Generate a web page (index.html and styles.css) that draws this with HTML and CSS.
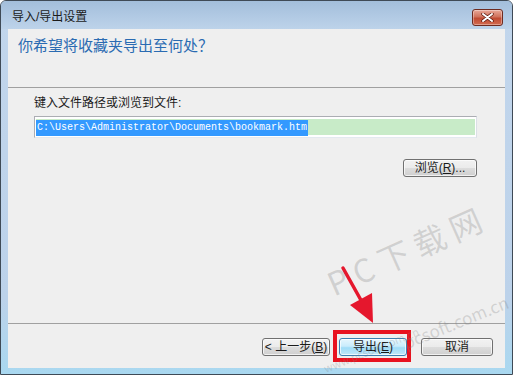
FILE: index.html
```html
<!DOCTYPE html>
<html lang="zh-CN">

<head>
    <meta charset="UTF-8">
    <meta name="viewport" content="width=device-width, initial-scale=1.0">
    <title>导入/导出设置</title>
    <link rel="stylesheet" href="styles.css">
</head>

<body>

    <div class="window">
        <div class="titlebar">
            <span class="title">导入/导出设置</span>
            <button class="close" aria-label="关闭">
                <svg width="13" height="9" viewBox="0 0 13 9">
                    <path d="M2 1 L11 8 M11 1 L2 8" stroke="#5a1a10" stroke-width="3.4" stroke-linecap="round" />
                    <path d="M2 1 L11 8 M11 1 L2 8" stroke="#ffffff" stroke-width="2" stroke-linecap="round" />
                </svg>
            </button>
        </div>

        <div class="client">
            <div class="header">
                <h1>你希望将收藏夹导出至何处？</h1>
            </div>

            <div class="body">
                <label class="label" for="pathInput">键入文件路径或浏览到文件:</label>
                <div class="path" id="pathInput">
                    <div class="path-line"><span class="selected">C:\Users\Administrator\Documents\bookmark.htm</span></div>
                </div>
                <div class="browse-row">
                    <button class="btn btn-browse">浏览(<u>R</u>)...</button>
                </div>
            </div>

            <div class="footer">
                <button class="btn btn-back">&lt; 上一步(<u>B</u>)</button>
                <button class="btn btn-default">导出(<u>E</u>)</button>
                <button class="btn btn-cancel">取消</button>
            </div>
        </div>

        <!-- annotation drawn over the dialog -->
        <svg class="arrow" width="513" height="375" viewBox="0 0 513 375">
            <line x1="343" y1="268" x2="362" y2="302" stroke="#e5172d" stroke-width="3.5" stroke-linecap="round" />
            <polygon points="373,323 350,305 372,293" fill="#e5172d" />
        </svg>

        <div class="watermark">
            <span class="wm-big">P C 下 载 网</span>
            <span class="wm-url">pcsoft.com.cn</span>
            <span class="wm-small">www.pcsoft.com.cn</span>
        </div>
    </div>

</body>

</html>
```

FILE: styles.css
```css
body {
    margin: 0;
    font-family: 'Liberation Sans', 'Noto Sans CJK SC', sans-serif;
    font-size: 12px;
    background-color: #ffffff;
}

.window {
    position: relative;
    width: 511px;
    height: 373px;
    border: 1px solid #3f4a56;
    border-radius: 6px 6px 0 0;
    background: linear-gradient(to bottom, #c2d6ec, #bcd2ea 80%, #a9d8f0);
    display: flex;
    flex-direction: column;
    overflow: hidden;
}

.titlebar {
    height: 28px;
    box-sizing: border-box;
    padding: 8px 9px 0 11px;
    display: flex;
    align-items: flex-start;
    background: linear-gradient(to bottom, #a3bedb, #bdd3ea);
}

.title {
    flex: 1;
    line-height: 16px;
    color: #1b1b1b;
}

.close {
    width: 31px;
    height: 17px;
    padding: 0;
    border: 1px solid #6e2b20;
    border-radius: 3px;
    background: linear-gradient(to bottom, #e9a898, #d0725c 45%, #c04a32 55%, #d26b50);
    box-shadow: inset 0 0 0 1px rgba(255, 255, 255, 0.35);
    display: flex;
    align-items: center;
    justify-content: center;
}

.client {
    flex: 1;
    margin: 0 7px 6px 7px;
    background-color: #efefef;
    display: flex;
    flex-direction: column;
}

.header {
    height: 59px;
    box-sizing: border-box;
    padding: 6px 0 0 10px;
    border-bottom: 1px solid #a0a0a0;
}

.header h1 {
    margin: 0;
    font-family: 'Noto Sans CJK SC', sans-serif;
    font-size: 15px;
    font-weight: normal;
    line-height: 20px;
    color: #2a6bb2;
}

.body {
    flex: 1;
    padding: 7px 28px 0 26px;
    display: flex;
    flex-direction: column;
}

.label {
    line-height: 16px;
    color: #1b1b1b;
}

.path {
    margin-top: 5px;
    height: 22px;
    box-sizing: border-box;
    padding: 2px 1px;
    border: 1px solid #abadb3;
    border-right-color: #dbdfe6;
    border-bottom-color: #e3e9ef;
    background-color: #ffffff;
}

.path-line {
    height: 16px;
    background-color: #c8ebc8;
}

.selected {
    display: inline-block;
    height: 16px;
    padding: 0 1px;
    background-color: #3399ff;
    color: #ffffff;
    font-family: 'Liberation Mono', monospace;
    font-size: 10px;
    line-height: 16px;
}

.browse-row {
    margin-top: 21px;
    display: flex;
    justify-content: flex-end;
}

.btn {
    position: relative;
    height: 18px;
    padding: 0;
    border: 1px solid #707070;
    border-radius: 3px;
    background: linear-gradient(to bottom, #f2f2f2, #ebebeb 50%, #dddddd 50%, #cfcfcf);
    box-shadow: inset 0 0 0 1px rgba(255, 255, 255, 0.7);
    font-family: 'Liberation Sans', 'Noto Sans CJK SC', sans-serif;
    font-size: 12px;
    line-height: 14px;
    color: #1b1b1b;
}

.btn u {
    text-decoration: underline;
}

.btn-browse {
    width: 74px;
}

.footer {
    height: 45px;
    box-sizing: border-box;
    padding: 14px 12px 0 0;
    border-top: 1px solid #a0a0a0;
    display: flex;
    justify-content: flex-end;
    align-items: flex-start;
}

.btn-back {
    width: 68px;
}

.btn-default {
    width: 68px;
    margin-left: 9px;
    border-color: #3c7fb1;
    background: linear-gradient(to bottom, #e6f6fd, #c9ecfc 45%, #9fdcf7 55%, #bfe8f9);
}

/* red highlight box around the export button */
.btn-default::after {
    content: '';
    position: absolute;
    top: -9px;
    right: -5px;
    bottom: -7px;
    left: -7px;
    border: 4px solid #e8121f;
}

.btn-cancel {
    width: 72px;
    margin-left: 14px;
}

.arrow {
    position: absolute;
    top: -1px;
    left: -1px;
    pointer-events: none;
}

.watermark {
    position: absolute;
    top: 0;
    left: 0;
    width: 100%;
    height: 100%;
    pointer-events: none;
    font-family: 'Noto Sans CJK SC', sans-serif;
    color: rgba(130, 130, 130, 0.28);
}

.wm-big {
    position: absolute;
    left: 318px;
    top: 262px;
    font-size: 32px;
    transform: rotate(-24deg);
    transform-origin: left top;
    white-space: nowrap;
}

.wm-url {
    position: absolute;
    left: 398px;
    top: 330px;
    font-size: 17px;
    transform: rotate(-22deg);
    transform-origin: left top;
    white-space: nowrap;
}

.wm-small {
    position: absolute;
    left: 320px;
    top: 360px;
    font-size: 11px;
    transform: rotate(-22deg);
    transform-origin: left top;
    white-space: nowrap;
}
```
